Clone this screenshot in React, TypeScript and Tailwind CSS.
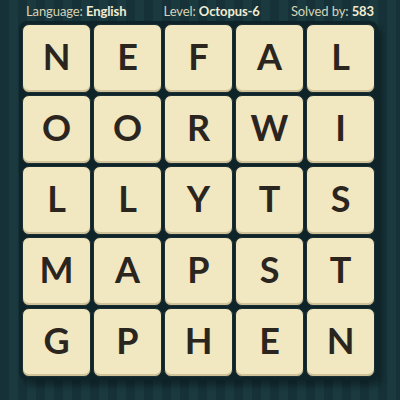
import React from "react";

const rows = ["NEFAL", "OORWI", "LLYTS", "MAPST", "GPHEN"];

export default function App() {
  return (
    <div
      className="w-[400px] h-[400px] relative overflow-hidden bg-[#163238] bg-[repeating-linear-gradient(90deg,#163238_0px,#163238_9px,#1a3a40_9px,#1a3a40_18px)]"
      style={{ fontFamily: "Lato, 'Noto Sans', sans-serif" }}
    >
      <div className="h-[21px] pt-[2px] flex items-center justify-between pl-[26px] pr-[26px] text-[13px] tracking-[-0.1px] text-[#d6d2b6] leading-none">
        <span>
          Language: <b className="font-bold text-[#f1ecd2]">English</b>
        </span>
        <span className="ml-[6px]">
          Level: <b className="font-bold text-[#f1ecd2]">Octopus-6</b>
        </span>
        <span>
          Solved by: <b className="font-bold text-[#f1ecd2]">583</b>
        </span>
      </div>
      <div className="ml-[19px] mr-[19px] rounded-[8px] bg-[#0f2429] p-[3px] w-[359px] shadow-[4px_6px_6px_rgba(0,0,0,0.35)]">
        <div className="grid grid-cols-[repeat(5,69px)] auto-rows-[69px] gap-[2px]">
          {rows.flatMap((r, i) =>
            r.split("").map((ch, j) => (
              <div
                key={`${i}-${j}`}
                className="rounded-[7px] bg-[#f1e7c0] border border-[#1b2e31] shadow-[inset_0_-2px_0_rgba(150,130,80,0.35)] flex items-center justify-center pb-[5px] text-[36px] font-bold text-[#2b2520] leading-none"
              >
                {ch}
              </div>
            ))
          )}
        </div>
      </div>
    </div>
  );
}
